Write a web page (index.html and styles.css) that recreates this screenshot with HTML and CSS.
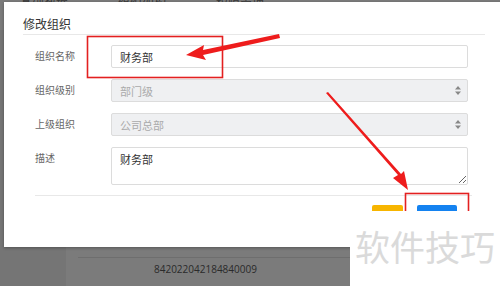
FILE: index.html
```html
<!DOCTYPE html>
<html lang="zh-CN">

<head>
    <meta charset="UTF-8">
    <meta name="viewport" content="width=device-width, initial-scale=1.0">
    <title>修改组织</title>
    <link rel="stylesheet" href="styles.css">
</head>

<body>

    <!-- 背景页面 -->
    <div class="page">
        <div class="page-nav">
            <span>基础数据</span>
            <span>组织架构</span>
            <span>权限管理</span>
        </div>
        <div class="page-main">
            <div class="page-side"></div>
            <div class="page-content">
                <div class="page-row">842022042184840009</div>
            </div>
        </div>
    </div>

    <!-- 弹窗 -->
    <div class="modal">
        <div class="modal-header">修改组织</div>
        <form class="modal-body" action="javascript:void(0);">
            <label class="form-label" for="name">组织名称</label>
            <input class="form-input" type="text" id="name" value="财务部">

            <label class="form-label">组织级别</label>
            <div class="form-select">
                <span>部门级</span>
                <svg width="6" height="9" viewBox="0 0 6 9"><path d="M3 0L6 3.5H0Z M3 9L6 5.5H0Z" fill="#888"/></svg>
            </div>

            <label class="form-label">上级组织</label>
            <div class="form-select">
                <span>公司总部</span>
                <svg width="6" height="9" viewBox="0 0 6 9"><path d="M3 0L6 3.5H0Z M3 9L6 5.5H0Z" fill="#888"/></svg>
            </div>

            <label class="form-label" for="desc">描述</label>
            <textarea class="form-textarea" id="desc">财务部</textarea>
        </form>
        <div class="modal-footer">
            <button class="btn btn-cancel">取消</button>
            <button class="btn btn-ok">确定</button>
        </div>
    </div>

    <!-- 标注 -->
    <svg class="marks" width="500" height="286" viewBox="0 0 500 286">
        <rect x="87.5" y="36.5" width="135" height="41" fill="none" stroke="#e32020" stroke-width="1.6"/>
        <rect x="405.5" y="193.5" width="63" height="30" fill="none" stroke="#e32020" stroke-width="1.6"/>
        <path d="M279 34 L203 50 L204 45 L186 55 L206 60 L203 55 L280 38 Z" fill="#ee1c1c"/>
        <path d="M326 93 L398 175 L393 178 L408 190 L404 171 L401 174 L328 92 Z" fill="#ee1c1c"/>
    </svg>

    <div class="watermark">软件技巧</div>

</body>

</html>
```

FILE: styles.css
```css
body {
    font-family: "Noto Sans CJK SC", "Noto Sans", sans-serif;
    background-color: #7b7b7b;
    margin: 0;
    width: 500px;
    height: 286px;
    overflow: hidden;
    position: relative;
}

.page {
    height: 286px;
    display: flex;
    flex-direction: column;
}

.page-nav {
    height: 30px;
    display: flex;
    gap: 50px;
    padding-left: 20px;
    font-size: 12px;
    color: #3a3a3a;
    line-height: 6px;
}

.page-main {
    flex: 1;
    display: flex;
}

.page-side {
    width: 66px;
    background-color: #757575;
}

.page-content {
    flex: 1;
    display: flex;
    flex-direction: column;
    justify-content: flex-end;
    padding-left: 12px;
}

.page-row {
    border-top: 1px solid #6e6e6e;
    height: 28px;
    line-height: 22px;
    padding-left: 76px;
    font-family: "Open Sans", sans-serif;
    font-size: 10px;
    color: #2a2a2a;
}

.modal {
    position: absolute;
    left: 4px;
    top: 2px;
    width: 500px;
    height: 245px;
    background-color: white;
    box-shadow: 0px 1px 3px rgba(0, 0, 0, 0.3);
}

.modal-header {
    margin: 0 19px;
    height: 32px;
    line-height: 44px;
    font-size: 12px;
    color: #333;
    border-bottom: 1px solid #e8e8e8;
}

.modal-body {
    display: grid;
    grid-template-columns: 76px 357px;
    row-gap: 11px;
    padding: 10px 0 10px 31px;
}

.form-label {
    font-size: 10px;
    color: #666;
    line-height: 21px;
}

.form-input,
.form-textarea,
.form-select {
    box-sizing: border-box;
    height: 23px;
    border: 1px solid #dcdcdc;
    border-radius: 2px;
    padding: 0 8px;
    font-family: inherit;
    font-size: 11px;
    color: #333;
    margin: 0;
}

.form-select {
    display: flex;
    justify-content: space-between;
    align-items: center;
    background-color: #eff0f2;
    color: #aaa;
    padding-right: 6px;
}

.form-textarea {
    height: 38px;
    padding-top: 3px;
    resize: vertical;
    outline: none;
}

.modal-footer {
    margin: 0 32px 0 31px;
    border-top: 1px solid #e8e8e8;
    padding-top: 9px;
    display: flex;
    justify-content: flex-end;
    gap: 14px;
    padding-right: 15px;
}

.btn {
    height: 24px;
    border: none;
    border-radius: 2px;
    font-family: inherit;
    font-size: 11px;
    color: white;
    padding: 0;
}

.btn-cancel {
    width: 31px;
    background-color: #f7b500;
}

.btn-ok {
    width: 40px;
    background-color: #1482f0;
}

.marks {
    position: absolute;
    left: 0;
    top: 0;
}

.watermark {
    position: absolute;
    left: 350px;
    top: 211px;
    width: 150px;
    height: 75px;
    background-color: white;
    font-size: 35px;
    color: #dadada;
    line-height: 70px;
    padding-left: 5px;
    box-sizing: border-box;
}
```
